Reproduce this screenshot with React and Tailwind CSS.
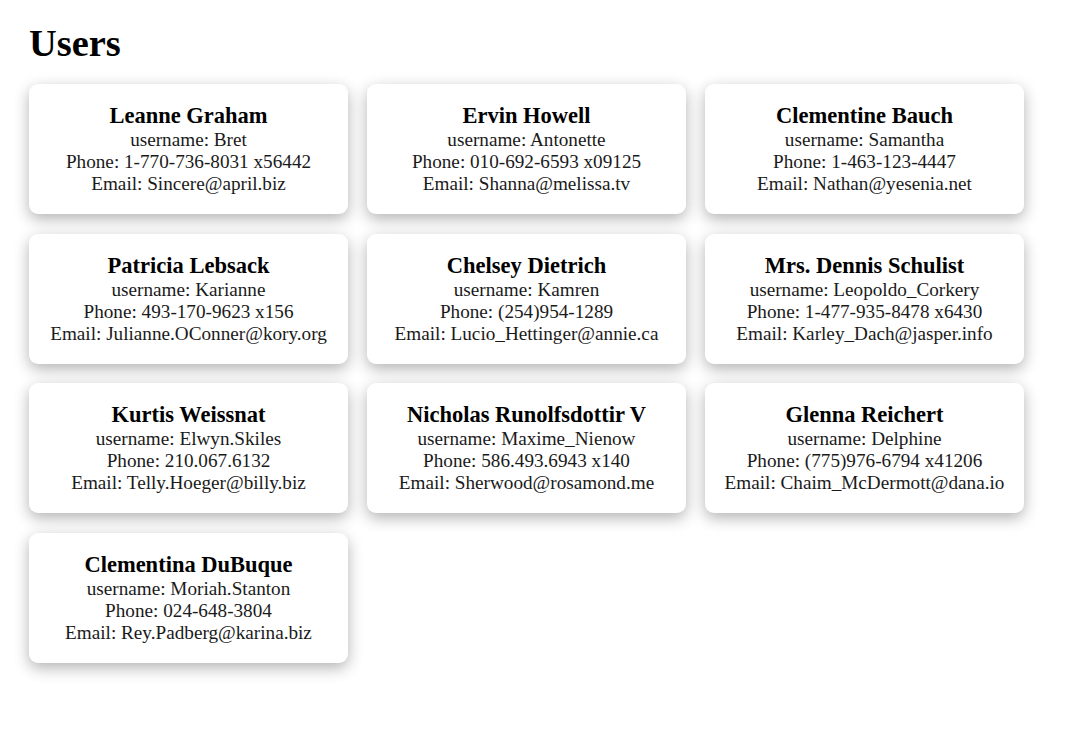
import React from 'react'

const users = [
  { id: 1, name: "Leanne Graham", username: "Bret", phone: "1-770-736-8031 x56442", email: "Sincere@april.biz" },
  { id: 2, name: "Ervin Howell", username: "Antonette", phone: "010-692-6593 x09125", email: "Shanna@melissa.tv" },
  { id: 3, name: "Clementine Bauch", username: "Samantha", phone: "1-463-123-4447", email: "Nathan@yesenia.net" },
  { id: 4, name: "Patricia Lebsack", username: "Karianne", phone: "493-170-9623 x156", email: "Julianne.OConner@kory.org" },
  { id: 5, name: "Chelsey Dietrich", username: "Kamren", phone: "(254)954-1289", email: "Lucio_Hettinger@annie.ca" },
  { id: 6, name: "Mrs. Dennis Schulist", username: "Leopoldo_Corkery", phone: "1-477-935-8478 x6430", email: "Karley_Dach@jasper.info" },
  { id: 7, name: "Kurtis Weissnat", username: "Elwyn.Skiles", phone: "210.067.6132", email: "Telly.Hoeger@billy.biz" },
  { id: 8, name: "Nicholas Runolfsdottir V", username: "Maxime_Nienow", phone: "586.493.6943 x140", email: "Sherwood@rosamond.me" },
  { id: 9, name: "Glenna Reichert", username: "Delphine", phone: "(775)976-6794 x41206", email: "Chaim_McDermott@dana.io" },
  { id: 10, name: "Clementina DuBuque", username: "Moriah.Stanton", phone: "024-648-3804", email: "Rey.Padberg@karina.biz" },
]

const UserCard = ({ user }) => (
  <div className="bg-white rounded-[9px] shadow-[0_5px_15px_rgba(0,0,0,0.3)] p-[19px] text-center">
    <h3 className="text-[22.5px] leading-[26px] font-bold text-black">{user.name}</h3>
    <p className="text-[19.2px] leading-[22px] text-[#1a1a1a]">username: {user.username}</p>
    <p className="text-[19.2px] leading-[22px] text-[#1a1a1a]">Phone: {user.phone}</p>
    <p className="text-[19.2px] leading-[22px] text-[#1a1a1a]">Email: {user.email}</p>
  </div>
)

const App = () => {
  return (
    <div className="min-h-screen bg-white px-[29px] pt-[21px] pb-10 font-['Liberation_Serif',serif]">
      <h1 className="text-[38.4px] leading-[44px] font-bold text-black mb-[19px]">Users</h1>
      <div className="grid grid-cols-[repeat(3,319px)] gap-x-[19px] gap-y-[19.7px]">
        {users.map((user) => (
          <UserCard key={user.id} user={user} />
        ))}
      </div>
    </div>
  )
}

export default App
